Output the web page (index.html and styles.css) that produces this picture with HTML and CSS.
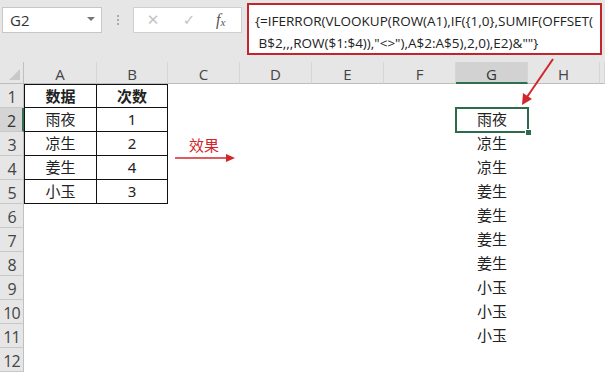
FILE: index.html
```html
<!DOCTYPE html>
<html lang="zh">
<head>
<meta charset="utf-8">
<link rel="stylesheet" href="styles.css">
</head>
<body>
<div class="app">
  <div class="toolbar">
    <div class="namebox"><span class="name">G2</span><span class="drop"></span></div>
    <div class="grip"><i></i><i></i><i></i></div>
    <div class="btns">
      <span class="btn x">✕</span>
      <span class="btn ok">✓</span>
      <span class="btn fx">f<sub>x</sub></span>
    </div>
    <div class="formula">{=IFERROR(VLOOKUP(ROW(A1),IF({1,0},SUMIF(OFFSET(<br>&nbsp;B$2,,,ROW($1:$4)),"&lt;&gt;"),A$2:A$5),2,0),E2)&amp;""}</div>
  </div>
  <div class="sheet">
    <div class="row hdr">
      <div class="rh corner"></div>
      <div class="ch ca">A</div><div class="ch cb">B</div><div class="ch c">C</div><div class="ch c">D</div><div class="ch c">E</div><div class="ch c">F</div><div class="ch c sel">G</div><div class="ch c">H</div><div class="ch ce"></div>
    </div>
    <div class="row">
      <div class="rh">1</div>
      <div class="cell ca t first bold">数据</div><div class="cell cb t first bold">次数</div><div class="cell c"></div><div class="cell c"></div><div class="cell c"></div><div class="cell c"></div><div class="cell c"></div><div class="cell c"></div><div class="cell ce"></div>
    </div>
    <div class="row">
      <div class="rh selr">2</div>
      <div class="cell ca t">雨夜</div><div class="cell cb t">1</div><div class="cell c"></div><div class="cell c"></div><div class="cell c"></div><div class="cell c"></div><div class="cell c active">雨夜</div><div class="cell c"></div><div class="cell ce"></div>
    </div>
    <div class="row">
      <div class="rh">3</div>
      <div class="cell ca t">凉生</div><div class="cell cb t">2</div><div class="cell c"></div><div class="cell c"></div><div class="cell c"></div><div class="cell c"></div><div class="cell c">凉生</div><div class="cell c"></div><div class="cell ce"></div>
    </div>
    <div class="row">
      <div class="rh">4</div>
      <div class="cell ca t">姜生</div><div class="cell cb t">4</div><div class="cell c"></div><div class="cell c"></div><div class="cell c"></div><div class="cell c"></div><div class="cell c">凉生</div><div class="cell c"></div><div class="cell ce"></div>
    </div>
    <div class="row">
      <div class="rh">5</div>
      <div class="cell ca t">小玉</div><div class="cell cb t">3</div><div class="cell c"></div><div class="cell c"></div><div class="cell c"></div><div class="cell c"></div><div class="cell c">姜生</div><div class="cell c"></div><div class="cell ce"></div>
    </div>
    <div class="row">
      <div class="rh">6</div>
      <div class="cell ca"></div><div class="cell cb"></div><div class="cell c"></div><div class="cell c"></div><div class="cell c"></div><div class="cell c"></div><div class="cell c">姜生</div><div class="cell c"></div><div class="cell ce"></div>
    </div>
    <div class="row">
      <div class="rh">7</div>
      <div class="cell ca"></div><div class="cell cb"></div><div class="cell c"></div><div class="cell c"></div><div class="cell c"></div><div class="cell c"></div><div class="cell c">姜生</div><div class="cell c"></div><div class="cell ce"></div>
    </div>
    <div class="row">
      <div class="rh">8</div>
      <div class="cell ca"></div><div class="cell cb"></div><div class="cell c"></div><div class="cell c"></div><div class="cell c"></div><div class="cell c"></div><div class="cell c">姜生</div><div class="cell c"></div><div class="cell ce"></div>
    </div>
    <div class="row">
      <div class="rh">9</div>
      <div class="cell ca"></div><div class="cell cb"></div><div class="cell c"></div><div class="cell c"></div><div class="cell c"></div><div class="cell c"></div><div class="cell c">小玉</div><div class="cell c"></div><div class="cell ce"></div>
    </div>
    <div class="row">
      <div class="rh">10</div>
      <div class="cell ca"></div><div class="cell cb"></div><div class="cell c"></div><div class="cell c"></div><div class="cell c"></div><div class="cell c"></div><div class="cell c">小玉</div><div class="cell c"></div><div class="cell ce"></div>
    </div>
    <div class="row">
      <div class="rh">11</div>
      <div class="cell ca"></div><div class="cell cb"></div><div class="cell c"></div><div class="cell c"></div><div class="cell c"></div><div class="cell c"></div><div class="cell c">小玉</div><div class="cell c"></div><div class="cell ce"></div>
    </div>
    <div class="row">
      <div class="rh">12</div>
      <div class="cell ca"></div><div class="cell cb"></div><div class="cell c"></div><div class="cell c"></div><div class="cell c"></div><div class="cell c"></div><div class="cell c"></div><div class="cell c"></div><div class="cell ce"></div>
    </div>
  </div>
  <span class="note">效果</span>
  <svg class="arrows" width="605" height="372" viewBox="0 0 605 372">
    <line x1="175" y1="158" x2="228" y2="158" stroke="#d3262a" stroke-width="1.5"/>
    <polygon points="235,158 226,154 226,162" fill="#d3262a"/>
    <line x1="553" y1="59" x2="527" y2="97" stroke="#d3262a" stroke-width="2"/>
    <polygon points="522,105 523,93 532,99" fill="#d3262a"/>
  </svg>
</div>
</body>
</html>
```
FILE: styles.css
```css
html, body {
  margin: 0;
  padding: 0;
  background: #ffffff;
  overflow: hidden;
}
.app {
  position: relative;
  width: 605px;
  height: 372px;
  overflow: hidden;
  font-family: "Open Sans", "Noto Sans CJK SC", sans-serif;
  color: #222;
}
.toolbar {
  height: 62px;
  background: #e6e6e6;
  display: flex;
  align-items: flex-start;
  box-sizing: border-box;
}
.namebox {
  margin: 7px 0 0 2px;
  width: 100px;
  height: 26px;
  box-sizing: border-box;
  background: #fff;
  border: 1px solid #c6c6c6;
  display: flex;
  align-items: center;
  justify-content: space-between;
  padding: 0 6px 0 7px;
}
.name {
  font-size: 15px;
  color: #333;
}
.drop {
  width: 0;
  height: 0;
  border-left: 4px solid transparent;
  border-right: 4px solid transparent;
  border-top: 4px solid #777;
  margin-top: -3px;
}
.grip {
  width: 31px;
  height: 26px;
  margin-top: 7px;
  display: flex;
  flex-direction: column;
  align-items: center;
  justify-content: center;
  gap: 2px;
}
.grip i {
  width: 2px;
  height: 2px;
  background: #aaa;
}
.btns {
  margin-top: 7px;
  width: 109px;
  height: 26px;
  box-sizing: border-box;
  background: #fff;
  border: 1px solid #d0d0d0;
  display: flex;
  align-items: center;
  padding-left: 12px;
}
.btn {
  display: inline-block;
  text-align: center;
}
.x {
  width: 14px;
  color: #c4c4c4;
  font-size: 15px;
  font-family: "DejaVu Sans", sans-serif;
}
.ok {
  margin-left: 22px;
  width: 14px;
  color: #c4c4c4;
  font-size: 15px;
  font-family: "DejaVu Sans", sans-serif;
}
.fx {
  margin-left: 20px;
  font-family: "Liberation Serif", serif;
  font-style: italic;
  font-size: 16px;
  color: #555;
}
.fx sub {
  font-size: 11px;
  vertical-align: -1px;
}
.formula {
  margin: 3px 0 0 5px;
  width: 355px;
  height: 52px;
  box-sizing: border-box;
  border: 2px solid #c4242b;
  background: #fff;
  padding: 5px 0 0 6px;
  font-family: "Open Sans", sans-serif;
  font-size: 13.5px;
  line-height: 22px;
  color: #222;
  white-space: nowrap;
}
.sheet {
  display: flex;
  flex-direction: column;
}
.row {
  display: flex;
  flex: none;
  height: 24px;
}
.row.hdr {
  height: 22px;
  background: #e6e6e6;
}
.rh {
  width: 24px;
  flex: none;
  box-sizing: border-box;
  background: #e6e6e6;
  border-right: 1px solid #c0c0c0;
  border-bottom: 1px solid #c8c8c8;
  font-size: 16px;
  color: #444;
  text-align: center;
  line-height: 26px;
  letter-spacing: -1px;
}
.rh.corner {
  position: relative;
  border-bottom: 1px solid #bdbdbd;
}
.rh.corner::after {
  content: "";
  position: absolute;
  right: 3px;
  bottom: 3px;
  border-left: 11px solid transparent;
  border-bottom: 11px solid #c8c8c8;
}
.rh.selr {
  background: #d4d4d4;
  border-right: 2px solid #2e6f4e;
  color: #333;
}
.ca { width: 73px; flex: none; }
.cb { width: 71px; flex: none; }
.c { width: 72px; flex: none; }
.ce { flex: 1; }
.ch {
  box-sizing: border-box;
  border-right: 1px solid #d6d6d6;
  border-bottom: 1px solid #bdbdbd;
  font-size: 15px;
  color: #444;
  text-align: center;
  line-height: 25px;
}
.ch.sel {
  background: #d2d2d2;
  border-bottom: 2px solid #2e6f4e;
  color: #333;
}
.cell {
  box-sizing: border-box;
  font-size: 15px;
  text-align: center;
  line-height: 23px;
  color: #222;
  font-family: "Noto Sans", "Noto Sans CJK SC", sans-serif;
}
.cell.t {
  border-right: 1px solid #111;
  border-bottom: 1px solid #111;
}
.cell.ca.t {
  border-left: 1px solid #111;
}
.cell.first {
  border-top: 1px solid #111;
}
.bold {
  font-weight: bold;
}
.cell.active {
  position: relative;
  outline: 2px solid #2e6b4c;
  outline-offset: -1px;
  z-index: 1;
}
.cell.active::after {
  content: "";
  position: absolute;
  right: -4px;
  bottom: -4px;
  width: 5px;
  height: 5px;
  background: #2e6b4c;
  border: 1px solid #fff;
}
.note {
  position: absolute;
  left: 189px;
  top: 134px;
  font-family: "Noto Sans CJK SC", sans-serif;
  font-size: 15px;
  color: #d3262a;
}
.arrows {
  position: absolute;
  left: 0;
  top: 0;
  pointer-events: none;
}
```
